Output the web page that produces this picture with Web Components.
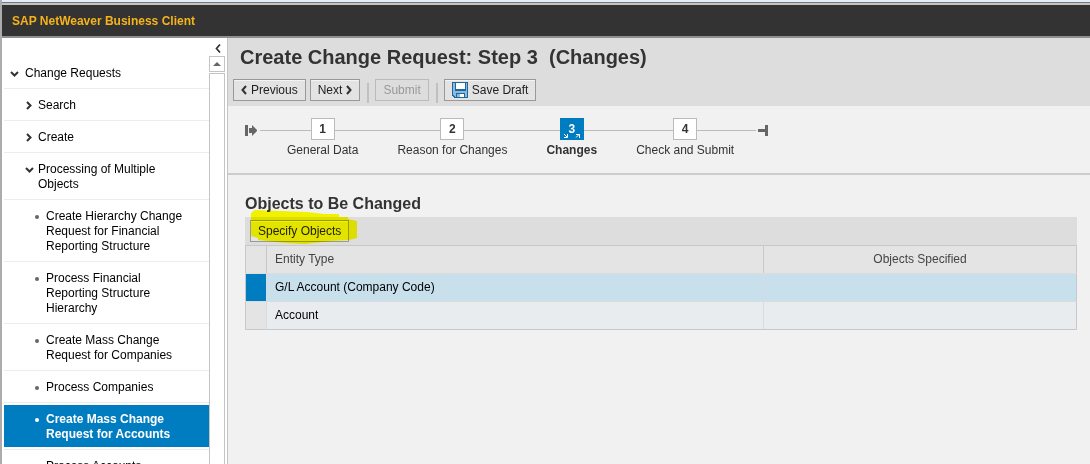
<!DOCTYPE html>
<html lang="en">
<head>
<meta charset="utf-8">
<title>SAP NetWeaver Business Client</title>
<style>
  html, body { margin: 0; height: 100%; }
  body { font: 12px/15px "Liberation Sans", Arial, sans-serif; color: #333; background: #f1f1f1; overflow: hidden; }
</style>
</head>
<body>
<client-shell>
  <shell-header slot="header">SAP NetWeaver Business Client</shell-header>
  <nav-tree slot="nav">
    <nav-entry level="1" kind="open">Change Requests</nav-entry>
    <nav-entry level="2" kind="closed">Search</nav-entry>
    <nav-entry level="2" kind="closed">Create</nav-entry>
    <nav-entry level="2" kind="open">Processing of Multiple Objects</nav-entry>
    <nav-entry level="3" kind="leaf">Create Hierarchy Change Request for Financial Reporting Structure</nav-entry>
    <nav-entry level="3" kind="leaf">Process Financial Reporting Structure Hierarchy</nav-entry>
    <nav-entry level="3" kind="leaf">Create Mass Change Request for Companies</nav-entry>
    <nav-entry level="3" kind="leaf">Process Companies</nav-entry>
    <nav-entry level="3" kind="leaf" selected>Create Mass Change Request for Accounts</nav-entry>
    <nav-entry level="3" kind="leaf">Process Accounts</nav-entry>
  </nav-tree>
  <page-header>
    <span slot="title">Create Change Request: Step 3&nbsp; (Changes)</span>
    <tool-button><svg slot="before" width="6" height="10" viewBox="0 0 6 10"><path d="M5 1L1.500 5L5 9" fill="none" stroke="#333" stroke-width="2"/></svg>Previous</tool-button>
    <tool-button>Next<svg slot="after" width="6" height="10" viewBox="0 0 6 10"><path d="M1 1L4.500 5L1 9" fill="none" stroke="#333" stroke-width="2"/></svg></tool-button>
    <tool-separator></tool-separator>
    <tool-button disabled>Submit</tool-button>
    <tool-separator></tool-separator>
    <tool-button><svg slot="before" width="16" height="16" viewBox="0 0 16 16" shape-rendering="crispEdges"><path d="M0 0H16V16H2L0 14Z" fill="#1a6a9c"/><path d="M1 1H3V9H14V1H15V15H3L1 13Z" fill="#8fb8dc"/><path d="M3 1H14V8H3Z" fill="#1a6a9c"/><path d="M4 1H13V7H4Z" fill="#fff"/><path d="M4 11H13V15H4Z" fill="#1a6a9c"/><path d="M5 12H12V15H5Z" fill="#fff"/><path d="M5 12H8V15H5Z" fill="#8fb8dc"/></svg>Save Draft</tool-button>
  </page-header>
  <road-map>
    <road-step number="1">General Data</road-step>
    <road-step number="2">Reason for Changes</road-step>
    <road-step number="3" current>Changes</road-step>
    <road-step number="4">Check and Submit</road-step>
  </road-map>
  <object-panel>
    <span slot="title">Objects to Be Changed</span>
    <marked-area slot="tools"><tool-button>Specify Objects</tool-button></marked-area>
    <object-table></object-table>
  </object-panel>
</client-shell>

<script>
  function component(name, html, setup) {
    const template = document.createElement('template');
    template.innerHTML = html;
    customElements.define(name, class extends HTMLElement {
      constructor() {
        super();
        this.attachShadow({ mode: 'open' }).append(template.content.cloneNode(true));
      }
      connectedCallback() { if (setup) setup(this, this.shadowRoot); }
    });
  }

  component('client-shell', `
    <style>
      :host { display: flex; flex-direction: column; height: 100vh; box-sizing: border-box; border-left: 2px solid #acacac; overflow: hidden; }
      .frame { flex: none; height: 5px; margin-left: -2px; background: linear-gradient(#e3eefb 0 2px, #777 2px 3px, #c4c4c4 3px 5px); }
      .body { display: grid; grid-template-columns: 226px minmax(0, 1fr); flex: 1; min-height: 0; }
      main { display: flex; flex-direction: column; min-width: 0; background: #f1f1f1; }
    </style>
    <div class="frame"></div>
    <slot name="header"></slot>
    <div class="body"><slot name="nav"></slot><main><slot></slot></main></div>`);

  component('shell-header', `
    <style>
      :host { display: block; flex: none; }
      header { padding: 9px 10px 7px; background: #333; border-bottom: 2px solid #8f8f8f; color: #f5b31c; font-weight: bold; }
    </style>
    <header><slot></slot></header>`);

  component('nav-tree', `
    <style>
      :host { display: flex; min-height: 0; box-sizing: border-box; background: #fff; border-right: 1px solid #c4c4c4; overflow: hidden; }
      nav { width: 205px; margin-left: 2px; padding-top: 19px; }
      .side { display: flex; flex-direction: column; flex: 1; }
      .side button { display: flex; justify-content: center; align-items: center; height: 18px; padding: 2px 0 0; border: 0; background: none; }
      .bar { display: flex; flex-direction: column; gap: 1px; flex: 1; width: 16px; box-sizing: border-box; }
      .side .up { height: 16px; padding: 0; border: 1px solid #c4c4c4; box-sizing: border-box; }
      .track { flex: 1; border: 1px solid #c4c4c4; border-bottom: 0; }
    </style>
    <nav aria-label="Services"><slot></slot></nav>
    <div class="side">
      <button aria-label="Collapse navigation"><svg width="6" height="9" viewBox="0 0 6 9"><path d="M5 0.500L1.500 4.500L5 8.500" fill="none" stroke="#333" stroke-width="1.700"/></svg></button>
      <div class="bar">
        <button class="up" aria-label="Scroll up"><svg width="8" height="4" viewBox="0 0 8 4"><path d="M0 4L4 0L8 4Z" fill="#666"/></svg></button>
        <div class="track"></div>
      </div>
    </div>`);

  const markers = {
    open: '<svg width="9" height="6" viewBox="0 0 9 6"><path d="M1 1L4.500 4.500L8 1" fill="none" stroke="#333" stroke-width="2"/></svg>',
    closed: '<svg width="6" height="9" viewBox="0 0 6 9"><path d="M1 1L4.500 4.500L1 8" fill="none" stroke="#333" stroke-width="2"/></svg>',
    leaf: '<svg width="4" height="4" viewBox="0 0 4 4"><circle cx="2" cy="2" r="2" fill="currentColor"/></svg>'
  };
  component('nav-entry', `
    <style>
      :host { display: block; padding: 2px 0; border-bottom: 1px solid #ececec; }
      a { display: flex; padding: 7px 20px 5px 5px; color: #000; text-decoration: none; }
      i { display: flex; flex: none; justify-content: center; align-items: center; width: 10px; height: 15px; margin-right: 6px; color: #666; }
      :host([level="2"]) a { padding-left: 20px; }
      :host([level="2"]) i { margin-right: 4px; }
      :host([level="3"]) a { padding-left: 28px; }
      :host([level="3"]) i { margin-right: 4px; }
      :host([selected]) a { background: #007cc0; color: #fff; font-weight: bold; }
      :host([selected]) i { color: #fff; }
    </style>
    <a href="#"><i></i><span><slot></slot></span></a>`,
    (host, root) => { root.querySelector('i').innerHTML = markers[host.getAttribute('kind')]; });

  component('page-header', `
    <style>
      :host { display: block; background: #ddd; padding: 7px 5px 3px; }
      h1 { margin: 0 0 10px 7px; font-size: 20px; line-height: 24px; white-space: nowrap; }
      .tools { display: flex; gap: 4px; }
    </style>
    <h1><slot name="title"></slot></h1>
    <div class="tools" role="toolbar"><slot></slot></div>`);

  component('tool-separator', `
    <style>
      :host { display: block; width: 2px; height: 20px; margin: 4px 2px 0 3px; background: #c0c0c0; }
    </style>`);

  component('tool-button', `
    <style>
      :host { display: block; }
      button { display: flex; align-items: center; gap: 4px; height: 22px; padding: 0 7px; border: 1px solid #999; background: #e3e3e3; box-shadow: inset 0 1px #f4f4f4; color: #222; font: inherit; white-space: nowrap; }
      :host([disabled]) button { border-color: #bbb; background: #ddd; color: #999; box-shadow: none; }
    </style>
    <button><slot name="before"></slot><span><slot></slot></span><slot name="after"></slot></button>`,
    (host, root) => { root.querySelector('button').disabled = host.hasAttribute('disabled'); });

  component('road-map', `
    <style>
      :host { display: flex; align-items: flex-start; padding: 12px 17px 15px; border-bottom: 2px solid #ccc; }
      svg { flex: none; margin-top: 6px; }
      .steps { display: flex; gap: 37px; padding: 0 21px 0 26px; margin: 0 2px 0 3px; background: linear-gradient(#bbb, #bbb) 0 12px / 100% 1px no-repeat; }
    </style>
    <svg width="12" height="12" viewBox="0 0 12 12"><path d="M0 1H3V12H0ZM4 4H7V1L12.500 6.500L7 12V9H4Z" fill="#666"/></svg>
    <div class="steps"><slot></slot></div>
    <svg width="10" height="12" viewBox="0 0 10 12"><path d="M0 5H7V1H10V12H7V8H0Z" fill="#666"/></svg>`);

  component('road-step', `
    <style>
      :host { display: flex; flex-direction: column; align-items: center; gap: 3px; padding: 0 1px; white-space: nowrap; }
      .box { position: relative; width: 24px; height: 22px; box-sizing: border-box; border: 1px solid #bbb; background: #fff; font-weight: bold; line-height: 20px; text-align: center; }
      svg { display: none; position: absolute; left: 3px; bottom: 1px; }
      :host([current]) .box { border-color: #007cc0; background: #007cc0; color: #fff; }
      :host([current]) svg { display: block; }
      :host([current]) .label { font-weight: bold; }
    </style>
    <div class="box"><span></span><svg width="16" height="4" viewBox="0 0 16 4"><path d="M0 0L3 3M3.500 0V3.500H0M12 3.500L15 0.500M12 0.500H15.500V4" fill="none" stroke="#fff"/></svg></div>
    <div class="label"><slot></slot></div>`,
    (host, root) => { root.querySelector('span').textContent = host.getAttribute('number'); });

  component('object-panel', `
    <style>
      :host { display: block; padding: 19px 13px 18px 17px; }
      h2 { margin: 0 0 3px; font-size: 16px; line-height: 20px; }
      .tools { display: flex; height: 22px; padding: 3px 5px; background: #ddd; }
    </style>
    <h2><slot name="title"></slot></h2>
    <div class="tools" role="toolbar"><slot name="tools"></slot></div>
    <slot></slot>`);

  component('marked-area', `
    <style>
      :host { display: block; position: relative; }
      svg { position: absolute; left: 1px; top: -10px; mix-blend-mode: multiply; pointer-events: none; }
    </style>
    <slot></slot>
    <svg width="106" height="34" viewBox="0 0 106 34" aria-hidden="true"><path d="M0 3L4 0L56 2L73 4H88V7H97V9L106 11V28L98 30L80 31L54 34L36 33L7 30V28L0 26Z" fill="#ff0"/></svg>`);

  component('object-table', `
    <style>
      :host { display: block; }
      table { width: 100%; table-layout: fixed; border-collapse: collapse; border: 1px solid #c8c8c8; background: #e8ecef; }
      .sel { width: 21px; }
      .count { width: 313px; }
      th, td { height: 27px; padding: 0 8px; border: 1px solid #d9dcdd; text-align: left; font-weight: normal; color: #000; }
      thead th { background: #e4e4e4; color: #444; border-color: #c8c8c8 #c8c8c8 #dcdcdc; }
      tbody th { background: #e4e4e4; padding: 0; }
      tr > :first-child { border-left-color: #c8c8c8; }
      tr > :last-child { border-right-color: #c8c8c8; text-align: center; }
      tbody tr:last-child > * { border-bottom-color: #c8c8c8; }
      .on td { background: #c8e0ec; }
      .on th { background: #007cc0; }
    </style>
    <table>
      <colgroup><col class="sel"><col><col class="count"></colgroup>
      <thead><tr><th></th><th scope="col">Entity Type</th><th scope="col">Objects Specified</th></tr></thead>
      <tbody>
        <tr class="on"><th></th><td>G/L Account (Company Code)</td><td></td></tr>
        <tr><th></th><td>Account</td><td></td></tr>
      </tbody>
    </table>`);
</script>
</body>
</html>
